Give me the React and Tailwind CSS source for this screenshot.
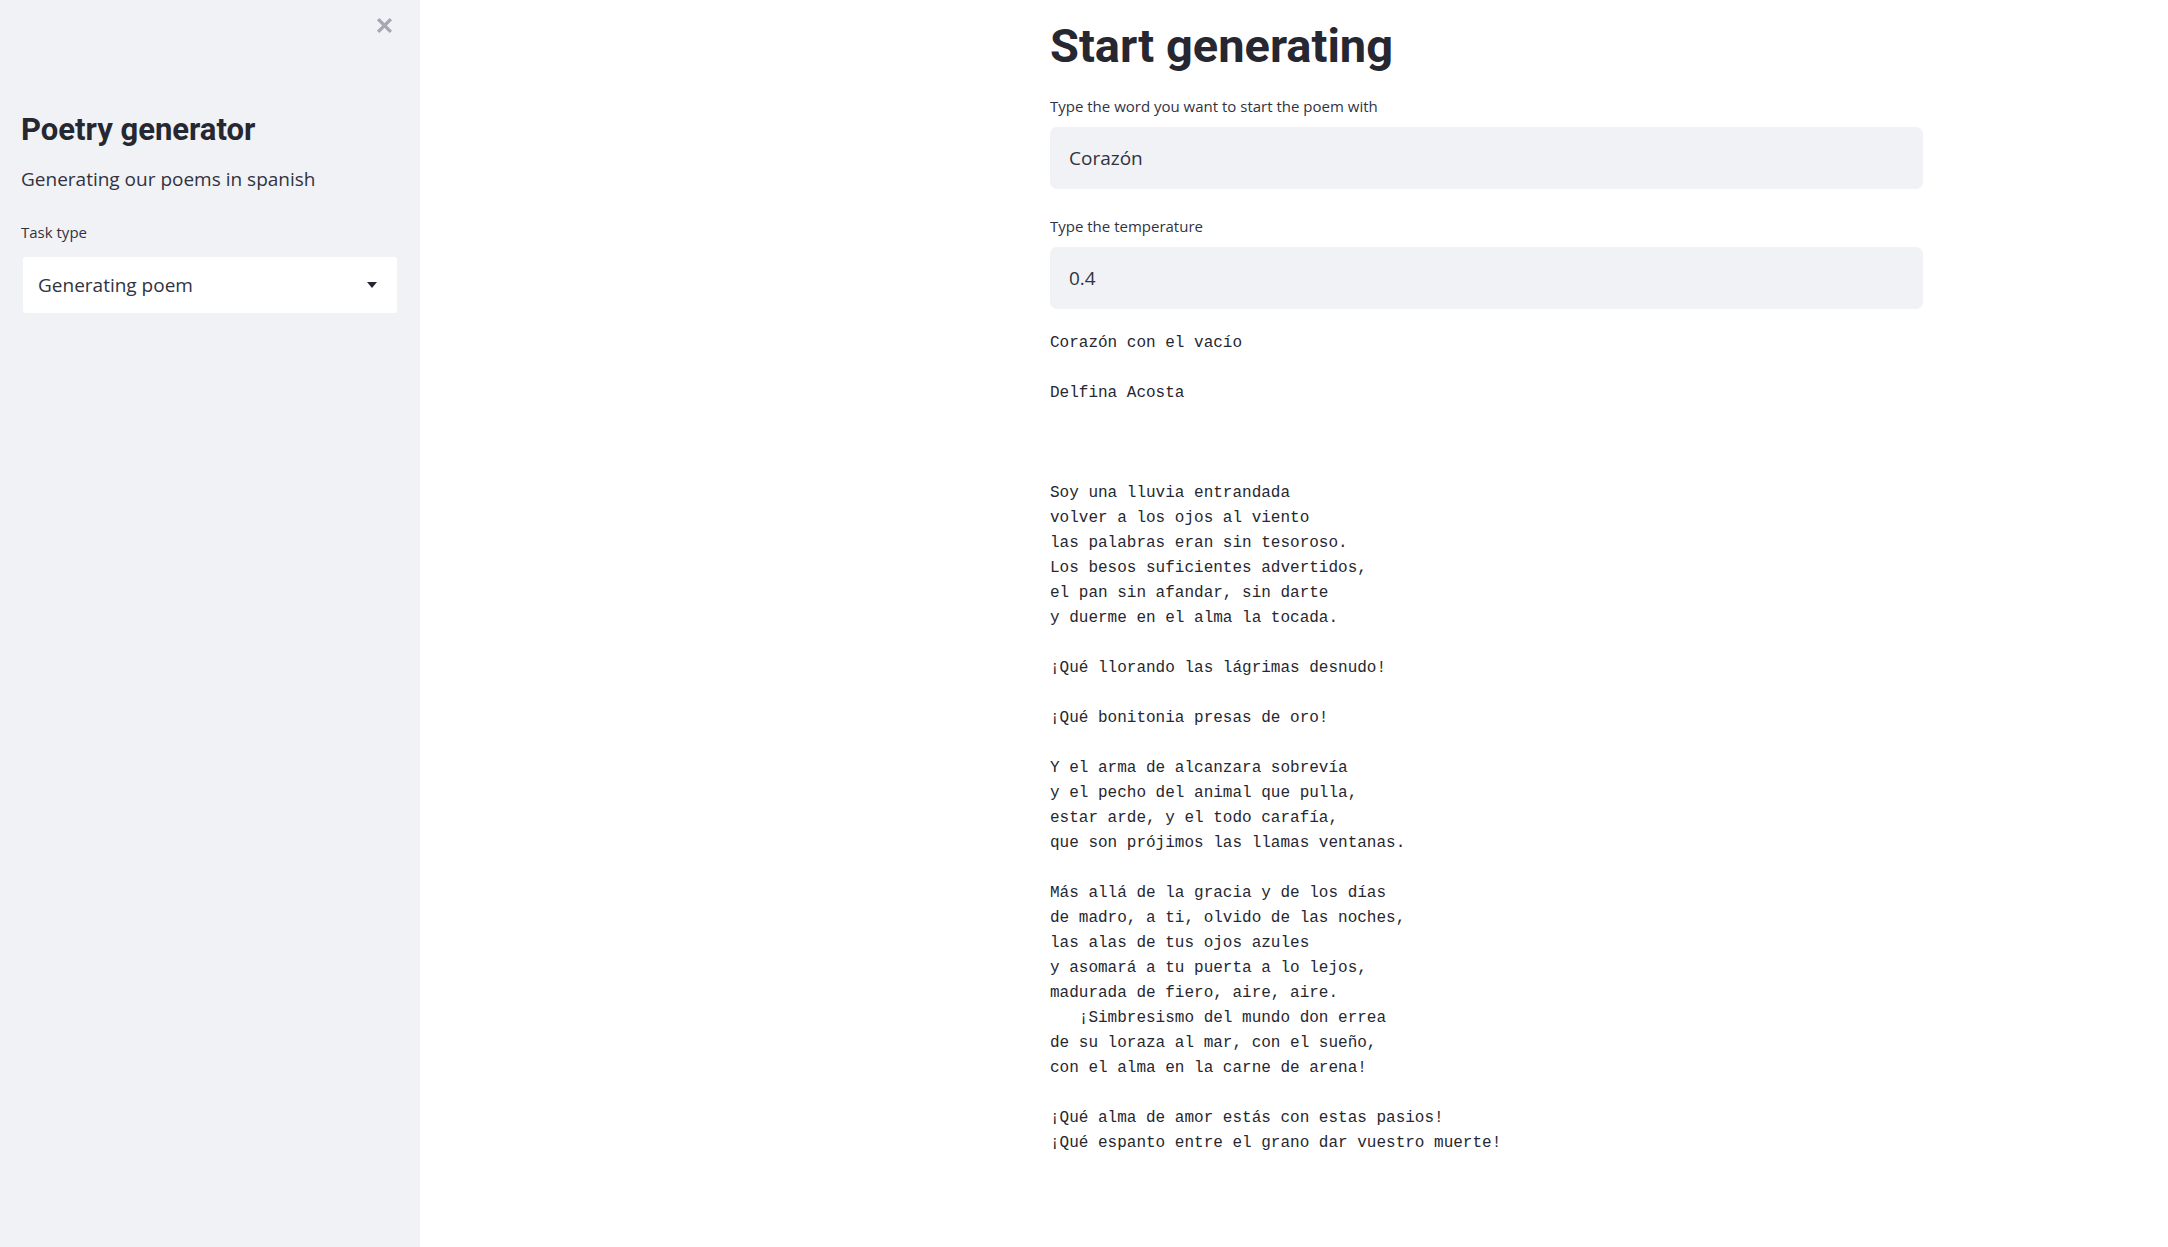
import { useState } from "react";

const poem = `Corazón con el vacío

Delfina Acosta



Soy una lluvia entrandada
volver a los ojos al viento
las palabras eran sin tesoroso.
Los besos suficientes advertidos,
el pan sin afandar, sin darte
y duerme en el alma la tocada.

¡Qué llorando las lágrimas desnudo!

¡Qué bonitonia presas de oro!

Y el arma de alcanzara sobrevía
y el pecho del animal que pulla,
estar arde, y el todo carafía,
que son prójimos las llamas ventanas.

Más allá de la gracia y de los días
de madro, a ti, olvido de las noches,
las alas de tus ojos azules
y asomará a tu puerta a lo lejos,
madurada de fiero, aire, aire.
   ¡Simbresismo del mundo don errea
de su loraza al mar, con el sueño,
con el alma en la carne de arena!

¡Qué alma de amor estás con estas pasios!
¡Qué espanto entre el grano dar vuestro muerte!`;

function Sidebar() {
  return (
    <aside className="relative w-[420px] shrink-0 bg-[#f0f2f6] min-h-screen px-[21px]">
      <button className="absolute right-[27px] top-[17px] text-[#a3a8b4]">
        <svg width="17" height="17" viewBox="0 0 16 16">
          <path d="M2 2 L14 14 M14 2 L2 14" stroke="currentColor" strokeWidth="3.2" strokeLinecap="butt" />
        </svg>
      </button>
      <h1 className="pt-[111px] font-['Roboto',sans-serif] text-[31px] leading-[38px] font-bold text-[#262730]">Poetry generator</h1>
      <p className="mt-[17px] text-[19px] leading-[26px] text-[#31333f]">Generating our poems in spanish</p>
      <p className="mt-[30px] text-[15px] leading-[20px] text-[#31333f]">Task type</p>
      <div className="mt-[15px] ml-[2px] flex h-[56px] w-[374px] items-center justify-between rounded-[3px] bg-white pl-[15px] pr-[20px]">
        <span className="text-[19px] text-[#31333f]">Generating poem</span>
        <svg width="10" height="6" viewBox="0 0 10 6">
          <path d="M0 0 L10 0 L5 6 Z" fill="#262730" />
        </svg>
      </div>
    </aside>
  );
}

function TextField({ label, value, className }) {
  const [v, setV] = useState(value);
  return (
    <div className={className}>
      <label className="block text-[15px] leading-[20px] text-[#31333f]">{label}</label>
      <input
        value={v}
        onChange={(e) => setV(e.target.value)}
        className="mt-[11px] block h-[62px] w-full rounded-[7px] bg-[#f0f2f6] px-[19px] text-[19px] text-[#31333f] outline-none"
      />
    </div>
  );
}

export default function App() {
  return (
    <div className="flex min-h-screen bg-white" style={{ fontFamily: '"Open Sans", "Noto Sans", sans-serif' }}>
      <Sidebar />
      <main className="flex-1 pl-[630px]">
        <div className="w-[873px]">
          <h1 className="pt-[16px] font-['Roboto',sans-serif] text-[47px] leading-[60px] font-bold text-[#262730]">Start generating</h1>
          <TextField className="mt-[20px]" label="Type the word you want to start the poem with" value="Corazón" />
          <TextField className="mt-[27px]" label="Type the temperature" value="0.4" />
          <pre className="mt-[22px] font-['Liberation_Mono',monospace] text-[16px] leading-[25px] text-[#262730] whitespace-pre">
            {poem}
          </pre>
        </div>
      </main>
    </div>
  );
}
